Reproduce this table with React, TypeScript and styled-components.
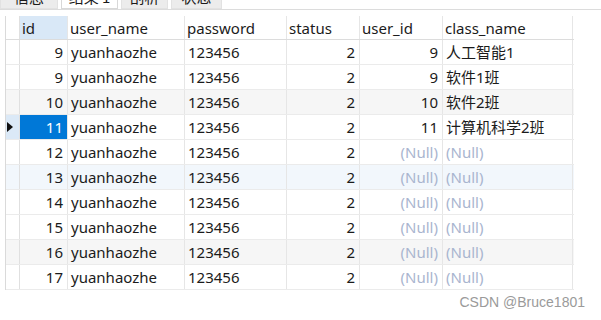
import styled, { createGlobalStyle } from "styled-components";

const GlobalStyle = createGlobalStyle`
  html, body {
    margin: 0;
    padding: 0;
    background: #ffffff;
  }
  body {
    font-family: "Noto Sans", "Noto Sans CJK SC", sans-serif;
    color: #1b1b1b;
    overflow: hidden;
  }
`;

const Page = styled.div`
  position: relative;
  width: 601px;
  height: 320px;
  overflow: hidden;
`;

const TabBar = styled.div`
  display: flex;
  gap: 3px;
  height: 24px;
  margin-top: -15px;
  border-bottom: 1px solid #dcdcdc;
`;

const Tab = styled.div<{ $active?: boolean; $w: number }>`
  width: ${(p) => p.$w}px;
  box-sizing: border-box;
  text-align: center;
  font-size: 15px;
  line-height: 24px;
  background: ${(p) => (p.$active ? "#ffffff" : "#ececec")};
  border: 1px solid ${(p) => (p.$active ? "#d8d8d8" : "#e2e2e2")};
  border-top: none;
  font-family: "Noto Sans CJK SC", sans-serif;
`;

const Grid = styled.div`
  margin: 6px 0 0 5px;
  width: 568px;
  border-left: 1px solid #dadada;
`;

const Row = styled.div<{ $tone?: "gray" | "blue" }>`
  display: flex;
  height: 25px;
  box-sizing: border-box;
  border-bottom: 1px solid #ebebeb;
  background: ${(p) =>
    p.$tone === "gray" ? "#f6f6f6" : p.$tone === "blue" ? "#f2f7fc" : "#ffffff"};
`;

const HeadRow = styled.div`
  display: flex;
  height: 24px;
  box-sizing: border-box;
  border-bottom: 1px solid #dcdcdc;
`;

const Gutter = styled.div<{ $current?: boolean }>`
  width: 14px;
  flex: none;
  box-sizing: border-box;
  border-right: 1px solid #e0e0e0;
  background: ${(p) => (p.$current ? "#dbe9f7" : "transparent")};
  display: flex;
  align-items: center;
  padding-left: 1px;
`;

const Arrow = styled.span`
  width: 0;
  height: 0;
  border-top: 5px solid transparent;
  border-bottom: 5px solid transparent;
  border-left: 6px solid #111111;
`;

const Cell = styled.div<{
  $w: number;
  $right?: boolean;
  $null?: boolean;
  $selected?: boolean;
  $head?: boolean;
  $headActive?: boolean;
}>`
  width: ${(p) => p.$w}px;
  flex: none;
  box-sizing: border-box;
  border-right: 1px solid #e6e6e6;
  font-size: 15px;
  line-height: 24px;
  white-space: nowrap;
  overflow: hidden;
  text-align: ${(p) => (p.$right ? "right" : "left")};
  padding: ${(p) => (p.$right ? "0 4px 0 0" : p.$head ? "0 0 0 2px" : "0 0 0 3px")};
  color: ${(p) => (p.$selected ? "#ffffff" : p.$null ? "#a9b5cf" : "#1b1b1b")};
  background: ${(p) =>
    p.$selected ? "#0078d7" : p.$headActive ? "#d9e8f7" : "transparent"};
`;

const Watermark = styled.div`
  position: absolute;
  right: 16px;
  top: 294px;
  font-family: "Liberation Sans", Arial, sans-serif;
  font-size: 14px;
  color: #9a9a9a;
  text-shadow: 0 0 2px #ffffff;
`;

const widths = [48, 117, 102, 73, 83, 130];
const heads = ["id", "user_name", "password", "status", "user_id", "class_name"];

type Rec = {
  id: number;
  userId: number | null;
  className: string | null;
  tone?: "gray" | "blue";
  current?: boolean;
};

const rows: Rec[] = [
  { id: 9, userId: 9, className: "人工智能1" },
  { id: 9, userId: 9, className: "软件1班" },
  { id: 10, userId: 10, className: "软件2班", tone: "gray" },
  { id: 11, userId: 11, className: "计算机科学2班", current: true },
  { id: 12, userId: null, className: null },
  { id: 13, userId: null, className: null, tone: "blue" },
  { id: 14, userId: null, className: null },
  { id: 15, userId: null, className: null },
  { id: 16, userId: null, className: null, tone: "gray" },
  { id: 17, userId: null, className: null },
];

export default function App() {
  return (
    <Page>
      <GlobalStyle />
      <TabBar>
        <Tab $w={58}>信息</Tab>
        <Tab $w={57} $active>
          结果 1
        </Tab>
        <Tab $w={47}>剖析</Tab>
        <Tab $w={51}>状态</Tab>
      </TabBar>
      <Grid>
        <HeadRow>
          <Gutter />
          {heads.map((h, i) => (
            <Cell key={h} $w={widths[i]} $head $headActive={i === 0}>
              {h}
            </Cell>
          ))}
        </HeadRow>
        {rows.map((r, idx) => (
          <Row key={idx} $tone={r.tone}>
            <Gutter $current={r.current}>{r.current && <Arrow />}</Gutter>
            <Cell $w={widths[0]} $right $selected={r.current}>
              {r.id}
            </Cell>
            <Cell $w={widths[1]}>yuanhaozhe</Cell>
            <Cell $w={widths[2]}>123456</Cell>
            <Cell $w={widths[3]} $right>
              2
            </Cell>
            <Cell $w={widths[4]} $right $null={r.userId === null}>
              {r.userId === null ? "(Null)" : r.userId}
            </Cell>
            <Cell $w={widths[5]} $null={r.className === null}>
              {r.className === null ? "(Null)" : r.className}
            </Cell>
          </Row>
        ))}
      </Grid>
      <Watermark>CSDN @Bruce1801</Watermark>
    </Page>
  );
}
